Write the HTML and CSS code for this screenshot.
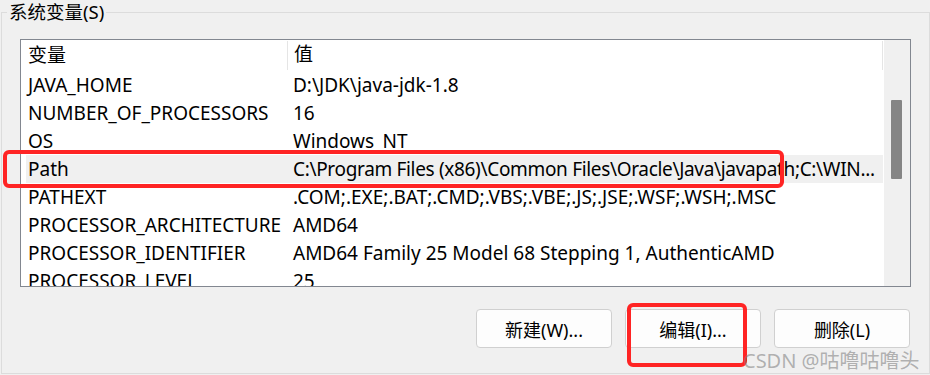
FILE: index.html
```html
<!DOCTYPE html>
<html lang="zh">
<head>
    <meta charset="UTF-8">
    <meta name="viewport" content="width=device-width, initial-scale=1.0">
    <title>系统变量</title>
    <link rel="stylesheet" href="styles.css">
</head>
<body>

    <div class="group">
        <div class="group-title">系统变量(S)</div>

        <div class="list">
            <div class="list-body">
                <div class="list-head">
                    <div class="col-name">变量</div>
                    <div class="col-value">值</div>
                    <div class="col-end"></div>
                </div>
                <div class="row"><div class="col-name">JAVA_HOME</div><div class="col-value">D:\JDK\java-jdk-1.8</div></div>
                <div class="row"><div class="col-name">NUMBER_OF_PROCESSORS</div><div class="col-value">16</div></div>
                <div class="row"><div class="col-name">OS</div><div class="col-value">Windows_NT</div></div>
                <div class="row selected"><div class="col-name">Path</div><div class="col-value tight">C:\Program Files (x86)\Common Files\Oracle\Java\javapath;C:\WIN...</div></div>
                <div class="row"><div class="col-name">PATHEXT</div><div class="col-value">.COM;.EXE;.BAT;.CMD;.VBS;.VBE;.JS;.JSE;.WSF;.WSH;.MSC</div></div>
                <div class="row"><div class="col-name">PROCESSOR_ARCHITECTURE</div><div class="col-value">AMD64</div></div>
                <div class="row"><div class="col-name">PROCESSOR_IDENTIFIER</div><div class="col-value">AMD64 Family 25 Model 68 Stepping 1, AuthenticAMD</div></div>
                <div class="row"><div class="col-name">PROCESSOR_LEVEL</div><div class="col-value">25</div></div>
            </div>
            <div class="scrollbar"><div class="thumb"></div></div>
        </div>

        <div class="buttons">
            <button class="btn">新建(W)...</button>
            <button class="btn">编辑(I)...</button>
            <button class="btn">删除(L)</button>
        </div>
    </div>

    <!-- annotations drawn over the dialog -->
    <div class="mark mark-row"></div>
    <div class="mark mark-btn"></div>
    <div class="watermark">CSDN @咕噜咕噜头</div>

</body>
</html>
```

FILE: styles.css
```css
body { margin: 0; background: #f0f0f0; font-family: "Noto Sans", "Noto Sans CJK SC", sans-serif; font-size: 19px; color: #000; overflow: hidden; }
.group { margin: 12px 0 0 1px; width: 927px; height: 360px; border: 1px solid #dcdcdc; }
.group-title { width: fit-content; margin: -13px 0 0 5px; padding: 0 2px; height: 26px; line-height: 24px; font-size: 18.5px; background: #f0f0f0; }
.list { display: flex; margin: 13px 0 0 18px; width: 889px; height: 246px; border: 1px solid #828790; background: #fff; overflow: hidden; }
.list-body { flex: 1; overflow: hidden; }
.list-head { display: flex; height: 31px; line-height: 29px; }
.list-head .col-name { border-right: 1px solid #e5e5e5; height: 29px; margin-top: 1px; }
.list-head .col-value { flex: 1; }
.list-head .col-end { width: 1px; height: 29px; margin-top: 1px; background: #e5e5e5; }
.row { display: flex; height: 28px; line-height: 28px; margin-left: 5px; white-space: nowrap; }
.row.selected { background: #f0f0f0; }
.col-name { width: 259px; padding-left: 7px; flex: none; }
.row .col-name { width: 259px; padding-left: 2px; }
.col-value { padding-left: 6px; overflow: hidden; }
.col-value.tight { letter-spacing: -0.33px; }
.scrollbar { width: 26px; flex: none; background: #f0f0f0; border-left: 1px solid #fff; }
.thumb { width: 11px; height: 79px; margin: 60px 0 0 7px; background: #858585; border-radius: 1px; }
.buttons { display: flex; justify-content: flex-end; gap: 13px; margin: 22px 19px 0 0; }
.btn { width: 136px; height: 39px; font: inherit; font-size: 18px; color: #000; background: #fdfdfd; border: 1px solid #d0d0d0; border-radius: 4px; padding: 0; }
.mark { position: absolute; border: 4px solid #ff2424; border-radius: 6px; }
.mark-row { left: 3px; top: 150px; width: 773px; height: 30px; }
.mark-btn { left: 627px; top: 303px; width: 112px; height: 56px; }
.watermark { position: absolute; left: 743px; top: 345px; font-size: 20px; color: rgba(120, 120, 120, 0.55); white-space: nowrap; }
```
